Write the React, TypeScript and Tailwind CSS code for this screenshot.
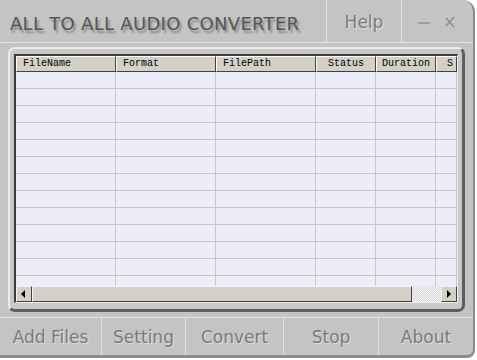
import React from 'react';

const columns = [
  { label: 'FileName', w: 'w-[100px] shrink-0', align: 'justify-start pl-[6px]' },
  { label: 'Format', w: 'w-[100px] shrink-0', align: 'justify-start pl-[6px]' },
  { label: 'FilePath', w: 'w-[100px] shrink-0', align: 'justify-start pl-[6px]' },
  { label: 'Status', w: 'w-[60px] shrink-0', align: 'justify-center' },
  { label: 'Duration', w: 'w-[60px] shrink-0', align: 'justify-center' },
  { label: 'S', w: 'flex-1 min-w-0', align: 'justify-end pr-[3px]' },
];

const toolbar = [
  { label: 'Add Files', w: 'w-[102px]' },
  { label: 'Setting', w: 'w-[84px]' },
  { label: 'Convert', w: 'w-[98px]' },
  { label: 'Stop', w: 'w-[95px]' },
  { label: 'About', w: 'flex-1' },
];

const rows = Array.from({ length: 14 });

const ArrowLeft = () => (
  <svg width="6" height="8" viewBox="0 0 6 8">
    <path d="M4 0 L0 4 L4 8 Z" fill="#000" />
  </svg>
);

const ArrowRight = () => (
  <svg width="6" height="8" viewBox="0 0 6 8">
    <path d="M1 0 L5 4 L1 8 Z" fill="#000" />
  </svg>
);

export default function App() {
  const skin = { fontFamily: '"DejaVu Sans", "Open Sans", sans-serif' };
  const mono = { fontFamily: '"Liberation Mono", "DejaVu Sans Mono", monospace' };

  return (
    <div className="w-[477px] h-[360px] bg-white overflow-hidden">
      <div
        className="w-[475px] h-[358px] bg-[#c4c4c4] rounded-tr-[12px] rounded-br-[8px] border-r-2 border-b-[3px] border-[#8c8c8c] flex flex-col"
        style={skin}
      >
        {/* title bar */}
        <div className="h-[43px] flex border-b border-[#e4e4e4] shrink-0">
          <div className="w-[327px] flex items-center pl-[10px] pt-[4px] border-r border-[#e2e2e2]">
            <span className="text-[18px] tracking-[0.3px] text-[#555555] [text-shadow:2px_3px_2px_#8a8a8a]">
              ALL TO ALL AUDIO CONVERTER
            </span>
          </div>
          <div className="w-[75px] flex items-center justify-center pt-[3px] border-r border-[#e2e2e2]">
            <span className="text-[17px] text-[#7c7c7c] [text-shadow:1px_1px_0_#e0e0e0]">Help</span>
          </div>
          <div className="flex-1 flex items-center pl-[15px] pt-[2px] gap-[13px]">
            <svg width="14" height="14" viewBox="0 0 14 14">
              <line x1="1" y1="8" x2="13" y2="8" stroke="#8a8a8a" strokeWidth="1.3" />
            </svg>
            <svg width="12" height="14" viewBox="0 0 12 14">
              <path d="M2 3 L10 12 M10 2 L2 11" stroke="#8a8a8a" strokeWidth="1.3" fill="none" />
            </svg>
          </div>
        </div>

        {/* list frame */}
        <div className="flex-1 px-[8px] pt-[4px]">
          <div className="h-[265px] rounded-[7px] border-t-2 border-l-2 border-[#ececec] border-r-[3px] border-b-[3px] border-r-[#5e5e5e] border-b-[#5e5e5e] bg-[#c8c8c8] px-[4px] pt-[5px] pb-[6px]">
            <div className="h-full border-t-2 border-l-2 border-[#3c3c3c] border-r border-b border-r-[#f0f0f0] border-b-[#f0f0f0] bg-[#ecedf8] flex flex-col overflow-hidden">
              {/* header */}
              <div className="flex h-[16px] shrink-0 bg-[#d4d0c8]">
                {columns.map((c) => (
                  <div
                    key={c.label}
                    className={`${c.w} flex items-center ${c.align} border-t border-l border-white border-r border-b border-r-[#404040] border-b-[#404040] text-[10px] text-black leading-none`}
                    style={mono}
                  >
                    {c.label}
                  </div>
                ))}
              </div>
              {/* rows */}
              <div className="flex-1 overflow-hidden">
                {rows.map((_, i) => (
                  <div key={i} className="flex h-[17px] border-b border-[#c6c6ce]">
                    {columns.map((c) => (
                      <div key={c.label} className={`${c.w} border-r border-[#c6c6ce]`} />
                    ))}
                  </div>
                ))}
              </div>
              {/* horizontal scrollbar */}
              <div className="flex h-[16px] shrink-0">
                <div className="w-[16px] flex items-center justify-center bg-[#d4d0c8] border-t border-l border-[#f4f4f4] border-r border-b border-r-[#404040] border-b-[#404040]">
                  <ArrowLeft />
                </div>
                <div className="w-[380px] bg-[#d4d0c8] border-t border-l border-[#f4f4f4] border-r border-b border-r-[#404040] border-b-[#404040]" />
                <div className="flex-1 bg-[repeating-conic-gradient(#d8d8d8_0_25%,#f4f4f4_0_50%)] bg-[length:2px_2px]" />
                <div className="w-[16px] flex items-center justify-center bg-[#d4d0c8] border-t border-l border-[#f4f4f4] border-r border-b border-r-[#404040] border-b-[#404040]">
                  <ArrowRight />
                </div>
              </div>
            </div>
          </div>
        </div>

        {/* toolbar */}
        <div className="h-[38px] flex border-t border-[#e4e4e4] shrink-0">
          {toolbar.map((b, i) => (
            <div
              key={b.label}
              className={`${b.w} flex items-center justify-center pt-[2px] ${i < toolbar.length - 1 ? 'border-r border-[#e2e2e2]' : ''}`}
            >
              <span className="text-[17px] text-[#7a7a7a] [text-shadow:1px_1px_0_#dcdcdc]">{b.label}</span>
            </div>
          ))}
        </div>
      </div>
    </div>
  );
}
